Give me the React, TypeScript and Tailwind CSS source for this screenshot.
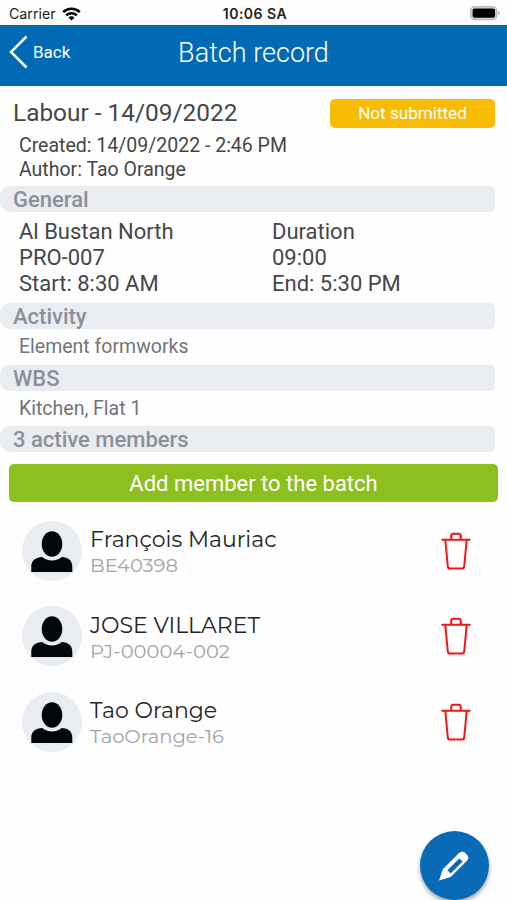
import type { ReactNode } from "react";

const members = [
  { name: "François Mauriac", code: "BE40398" },
  { name: "JOSE VILLARET", code: "PJ-00004-002" },
  { name: "Tao Orange", code: "TaoOrange-16" },
];

function StatusBar() {
  return (
    <div className="flex h-[25px] items-center justify-between pl-[9px] pr-[6px] pt-[2px] font-['Inter',sans-serif] text-[#222]">
      <div className="flex w-[160px] items-center gap-[6px]">
        <span className="text-[14.2px] leading-[20px]">Carrier</span>
        <svg width="19" height="14" viewBox="0 0 19 14" fill="none" stroke="#000" strokeWidth="2.5">
          <path d="M1.2 5.1C5.8 .7 13.2 .7 17.8 5.1" />
          <path d="M4.2 8.3C7.2 5.5 11.8 5.5 14.8 8.3" />
          <path d="M6.5 10.4C8.3 8.8 10.7 8.8 12.5 10.4L9.5 13.5Z" fill="#000" stroke="none" />
        </svg>
      </div>
      <span className="text-[14px] font-semibold leading-[20px] tracking-[0.5px]">10:06 SA</span>
      <div className="flex w-[160px] justify-end pb-[2px]">
        <svg width="32" height="16" viewBox="0 0 32 16">
          <rect x="1.7" y="1.7" width="26" height="12.8" rx="4" fill="#ddd" stroke="#bbb" strokeWidth="1.4" />
          <rect x="3.6" y="3.5" width="22.5" height="9.2" rx="2" fill="#000" />
          <path d="M29.3 5.7C31.2 6.7 31.2 9.4 29.3 10.4Z" fill="#aaa" />
        </svg>
      </div>
    </div>
  );
}

function Section({ children }: { children: ReactNode }) {
  return (
    <h2 className="mr-[12px] h-[26px] shrink-0 rounded-l-[10px] rounded-r-[5px] bg-[#e9ecf0] pl-[13px] text-[22px] font-medium leading-[27px] text-[#8b9199]">
      {children}
    </h2>
  );
}

function Avatar() {
  return (
    <svg width="60" height="60" viewBox="0 0 60 60" className="shrink-0">
      <circle cx="30" cy="30" r="30" fill="#e9edf1" />
      <ellipse cx="30" cy="23" rx="10.3" ry="12.8" fill="#02070b" />
      <path d="M9.3 51V45.5C9.3 39.5 14 36 20.3 36C25 40.5 35 40.5 39.7 36C46 36 50.3 39.5 50.3 45.5V51Z" fill="#02070b" />
    </svg>
  );
}

function Trash() {
  return (
    <svg width="30" height="40" viewBox="0 0 30 40" className="mt-[2px]" fill="none" stroke="#f31515" strokeWidth="2" strokeLinecap="round" strokeLinejoin="round">
      <path d="M1.3 7.7H28.7M10.2 7.5V4C10.2 2.3 11 1.7 12.3 1.7H17.7C19 1.7 19.8 2.3 19.8 4V7.5M4.3 8L6.8 34.5C7 36 7.5 36.5 9 36.5H21C22.5 36.5 23 36 23.2 34.5L25.7 8" />
    </svg>
  );
}

export default function App() {
  return (
    <main className="relative flex h-[900px] w-[507px] flex-col overflow-hidden bg-[#fefefe] font-['Roboto',sans-serif] text-[#454649]">
      <StatusBar />
      <header className="grid h-[61px] shrink-0 grid-cols-[1fr_auto_1fr] items-center bg-[#016ab5] text-white">
        <button className="flex items-center gap-[5px] pb-[8px] pl-[9px]">
          <svg width="19" height="34" viewBox="0 0 19 34" fill="none" stroke="white" strokeWidth="2.5">
            <path d="M17.5 1.5L2 17L17.5 32.5" />
          </svg>
          <span className="text-[17px] leading-[24px]">Back</span>
        </button>
        <h1 className="pb-[6px] text-[27px] font-light leading-[34px]">Batch record</h1>
      </header>

      <div className="flex h-[47px] shrink-0 items-start justify-between pl-[13px] pr-[12px] pt-[12px]">
        <h2 className="text-[24.4px] leading-[30px]">Labour - 14/09/2022</h2>
        <span className="mt-px flex h-[29px] w-[165px] items-center justify-center rounded-[5px] bg-[#f8bd03] text-[17.1px] text-white">Not submitted</span>
      </div>
      <div className="h-[53px] shrink-0 pl-[19px] pt-px text-[19.5px] leading-[23.5px]">
        <p>Created: 14/09/2022 - 2:46 PM</p>
        <p>Author: Tao Orange</p>
      </div>

      <Section>General</Section>
      <div className="grid h-[91px] shrink-0 grid-cols-2 pl-[19px] pt-[7px] text-[22px] leading-[26px]">
        <div>
          <p>Al Bustan North</p>
          <p>PRO-007</p>
          <p>Start: 8:30 AM</p>
        </div>
        <div className="pl-[9px]">
          <p>Duration</p>
          <p>09:00</p>
          <p>End: 5:30 PM</p>
        </div>
      </div>
      <Section>Activity</Section>
      <p className="h-[35.5px] shrink-0 pl-[19px] text-[19.5px] leading-[35px] text-[#737477]">Element formworks</p>
      <Section>WBS</Section>
      <p className="h-[35.5px] shrink-0 pl-[19px] text-[19.5px] leading-[35px] text-[#737477]">Kitchen, Flat 1</p>
      <Section>3 active members</Section>

      <button className="ml-[9px] mt-[12px] h-[38px] w-[489px] shrink-0 rounded-[5px] bg-[#8dc01f] text-[22px] text-white">
        Add member to the batch
      </button>

      <ul className="flex flex-col gap-[25.5px] pl-[22px] pr-[36px] pt-[18.5px] font-['Montserrat','Inter',sans-serif]">
        {members.map((m) => (
          <li key={m.code} className="flex h-[60px] items-center">
            <Avatar />
            <div className="ml-[8px] flex-1 pt-[3px]">
              <p className="text-[22px] leading-[26px] text-[#252628]">{m.name}</p>
              <p className="text-[19.5px] leading-[24px] text-[#a2a4a7]">{m.code}</p>
            </div>
            <Trash />
          </li>
        ))}
      </ul>

      <button className="absolute left-[420px] top-[831px] flex size-[69px] items-center justify-center rounded-full bg-[#096ab5] shadow-[0_3px_4px_rgba(0,0,0,0.35)]">
        <svg width="32" height="32" viewBox="0 0 32 32" className="mr-[2px]">
          <path d="M1 30.5L4.8 19.2L20.8 3.3C22.5 1.6 25.1 1.2 27 2.8L29.2 5C31 6.7 30.7 9.1 29 10.8L12.7 27Z" fill="white" />
          <path d="M9.4 20.2L21.2 8.4L24.7 11.6L12.7 23.4Z" fill="#096ab5" />
        </svg>
      </button>
    </main>
  );
}
